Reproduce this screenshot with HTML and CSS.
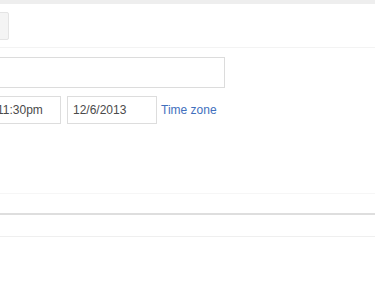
FILE: index.html
```html
<!DOCTYPE html>
<html>
<head>
<meta charset="utf-8">
<link rel="stylesheet" href="styles.css">
</head>
<body>
<div class="topbar"></div>
<div class="toolbar">
  <div class="btn"></div>
</div>
<div class="form">
  <div class="title-input"></div>
  <div class="when">
    <div class="field time">11:30pm</div>
    <div class="field date">12/6/2013</div>
    <a class="tz">Time zone</a>
  </div>
</div>
<div class="sep1"></div>
<div class="sep2"></div>
<div class="sep3"></div>
</body>
</html>
```
FILE: styles.css
```css
html, body {
  margin: 0;
  padding: 0;
  background: #fff;
  overflow: hidden;
  font-family: "Liberation Sans", Arial, sans-serif;
  font-size: 12px;
  color: #333;
}
.topbar {
  height: 4px;
  background: #eeeeee;
}
.toolbar {
  height: 44px;
  padding-top: 8px;
  box-sizing: border-box;
  border-bottom: 1px solid #f3f3f3;
}
.btn {
  margin-left: -20px;
  width: 29px;
  height: 28px;
  box-sizing: border-box;
  background: #f4f4f4;
  border: 1px solid #e4e4e4;
  border-radius: 2px;
}
.form {
  padding-top: 9px;
}
.title-input {
  margin-left: -40px;
  width: 265px;
  height: 31px;
  box-sizing: border-box;
  border: 1px solid #dcdcdc;
}
.when {
  display: flex;
  align-items: center;
  margin-top: 8px;
  margin-left: -9px;
}
.field {
  height: 28px;
  box-sizing: border-box;
  border: 1px solid #dddddd;
  line-height: 26px;
  padding-left: 5px;
  color: #4a4a4a;
}
.time {
  width: 70px;
}
.date {
  margin-left: 6px;
  width: 90px;
}
.tz {
  margin-left: 4px;
  color: #4170bd;
  line-height: 26px;
}
.sep1 {
  margin-top: 69px;
  height: 1px;
  background: #f6f6f6;
}
.sep2 {
  margin-top: 19px;
  height: 2px;
  background: #dedede;
}
.sep3 {
  margin-top: 21px;
  height: 1px;
  background: #efefef;
}
```
